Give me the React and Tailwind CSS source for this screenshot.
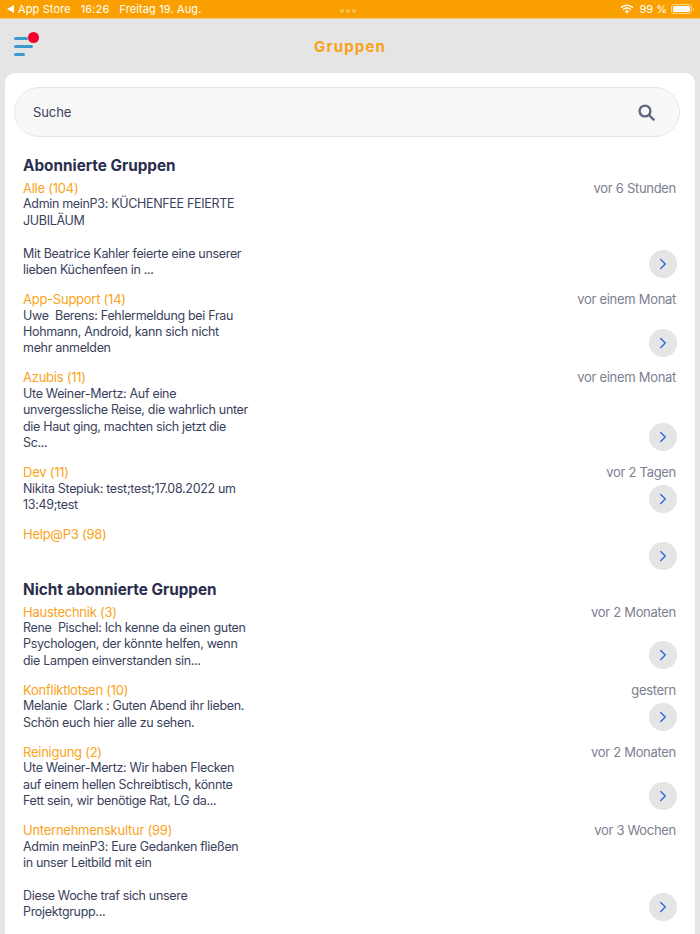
import React from "react";
import { ChevronRight } from "lucide-react";

const sub = [
  ["Alle (104)", ["Admin meinP3: KÜCHENFEE FEIERTE", "JUBILÄUM", "\u00a0", "Mit Beatrice Kahler feierte eine unserer", "lieben Küchenfeen in ..."], "vor 6 Stunden"],
  ["App-Support (14)", ["Uwe  Berens: Fehlermeldung bei Frau", "Hohmann, Android, kann sich nicht", "mehr anmelden"], "vor einem Monat"],
  ["Azubis (11)", ["Ute Weiner-Mertz: Auf eine", "unvergessliche Reise, die wahrlich unter", "die Haut ging, machten sich jetzt die", "Sc..."], "vor einem Monat"],
  ["Dev (11)", ["Nikita Stepiuk: test;test;17.08.2022 um", "13:49;test"], "vor 2 Tagen"],
  ["Help@P3 (98)", [], ""],
];
const unsub = [
  ["Haustechnik (3)", ["Rene  Pischel: Ich kenne da einen guten", "Psychologen, der könnte helfen, wenn", "die Lampen einverstanden sin..."], "vor 2 Monaten"],
  ["Konfliktlotsen (10)", ["Melanie  Clark : Guten Abend ihr lieben.", "Schön euch hier alle zu sehen."], "gestern"],
  ["Reinigung (2)", ["Ute Weiner-Mertz: Wir haben Flecken", "auf einem hellen Schreibtisch, könnte", "Fett sein, wir benötige Rat, LG da..."], "vor 2 Monaten"],
  ["Unternehmenskultur (99)", ["Admin meinP3: Eure Gedanken fließen", "in unser Leitbild mit ein", "\u00a0", "Diese Woche traf sich unsere", "Projektgrupp..."], "vor 3 Wochen"],
];

function Row({ name, lines, time, last }) {
  return (
    <div className={last ? "flex justify-between mb-[10px]" : "flex justify-between mb-[12.7px]"}>
      <div className="w-[235px] text-[12.5px] leading-[16.4px] tracking-[-0.32px] text-[#3a3f5c]">
        <div className="text-[#f9a31a] text-[13px] tracking-[-0.25px]">{name}</div>
        {lines.map((l, i) => (
          <div key={i} className="whitespace-pre">{l}</div>
        ))}
      </div>
      <div className={last ? "flex flex-col items-end justify-between pt-[15.6px]" : "flex flex-col items-end justify-between"}>
        {time ? <div className="text-[13px] leading-[16.4px] tracking-[-0.3px] text-[#7d8090] mr-[1px]">{time}</div> : null}
        <div className="w-[28px] h-[28px] rounded-full bg-[#e5e5e5] flex items-center justify-center">
          <ChevronRight size={18} strokeWidth={1.9} className="text-[#2a6fdb]" />
        </div>
      </div>
    </div>
  );
}

function Heading({ children }) {
  return (
    <h2 className="text-[15.3px] leading-[20px] font-bold text-[#2a2e4d] mb-[4px]">
      {children}
    </h2>
  );
}

export default function App() {
  return (
    <div className="w-[700px] h-[934px] bg-[#e5e5e5] overflow-hidden flex flex-col" style={{ fontFamily: "Inter, Roboto, sans-serif" }}>
      <div className="h-[19px] bg-[#f99f00] border-b border-[#fbc770] text-white text-[11px] leading-[18px] relative flex justify-between pl-[7px] pr-[6px] shrink-0">
        <div className="flex items-center tracking-[0.12px]">
          <svg width="8" height="8" viewBox="0 0 8 8" className="mr-[3px]"><path d="M0 4 7 0v8z" fill="#fff" /></svg>
          <span>App Store</span>
          <span className="ml-[10px]">16:26</span>
          <span className="ml-[10px]">Freitag 19. Aug.</span>
        </div>
        <div className="absolute left-[340px] top-[9px] flex gap-[2px]">
          <span className="w-[4px] h-[4px] rounded-full bg-[#fcc14f]" />
          <span className="w-[4px] h-[4px] rounded-full bg-[#fcc14f]" />
          <span className="w-[4px] h-[4px] rounded-full bg-[#fcc14f]" />
        </div>
        <div className="flex items-center">
          <svg width="14" height="10" viewBox="0 0 14 10" className="mr-[5px]">
            <path d="M1 3.6a8.6 8.6 0 0 1 12 0M3 5.7a5.8 5.8 0 0 1 8 0" fill="none" stroke="#fff" strokeWidth="1.5" />
            <path d="M4.9 7.4a3 3 0 0 1 4.2 0L7 9.6z" fill="#fff" />
          </svg>
          <span>99 %</span>
          <div className="ml-[4px] w-[21px] h-[10px] rounded-[3px] border border-[#fcd68f] p-[1px]">
            <div className="w-full h-full bg-white rounded-[1.5px]" />
          </div>
          <div className="w-[1px] h-[3px] bg-[#fcd68f] ml-[1px]" />
        </div>
      </div>

      <div className="h-[54px] relative flex items-center justify-center shrink-0 pt-[2px]">
        <div className="absolute left-[14px] top-[18px] flex flex-col gap-[5px]">
          <div className="w-[14px] h-[3px] bg-[#3b9ccb] rounded-full" />
          <div className="w-[19px] h-[3px] bg-[#3b9ccb] rounded-full" />
          <div className="w-[11px] h-[3px] bg-[#3b9ccb] rounded-full" />
        </div>
        <div className="absolute left-[28px] top-[13px] w-[11px] h-[11px] rounded-full bg-[#f5002a]" />
        <div className="text-[15px] font-bold text-[#f9a31a] tracking-[1.15px]">Gruppen</div>
      </div>

      <div className="flex-1 mx-[5px] bg-white rounded-t-[10px] pt-[14px] px-[9px] overflow-hidden">
        <div className="h-[50px] w-[666px] rounded-full bg-[#f8f8f8] border border-[#e6e6e6] flex items-center justify-between pl-[18px] pr-[24px] mb-[19px]">
          <span className="text-[13px] tracking-[-0.1px] text-[#3a3f5c] pt-[1px]">Suche</span>
          <svg width="17" height="17" viewBox="0 0 17 17" fill="none" stroke="#62667f" strokeWidth="2.4" strokeLinecap="round">
            <circle cx="7" cy="7" r="5.4" />
            <path d="m11 11 4.6 4.6" />
          </svg>
        </div>
        <div className="pl-[9px] pr-[9px]">
          <Heading>Abonnierte Gruppen</Heading>
          {sub.map((r, i) => <Row key={r[0]} name={r[0]} lines={r[1]} time={r[2]} last={i === sub.length - 1} />)}
          <Heading>Nicht abonnierte Gruppen</Heading>
          {unsub.map((r) => <Row key={r[0]} name={r[0]} lines={r[1]} time={r[2]} />)}
        </div>
      </div>
    </div>
  );
}
